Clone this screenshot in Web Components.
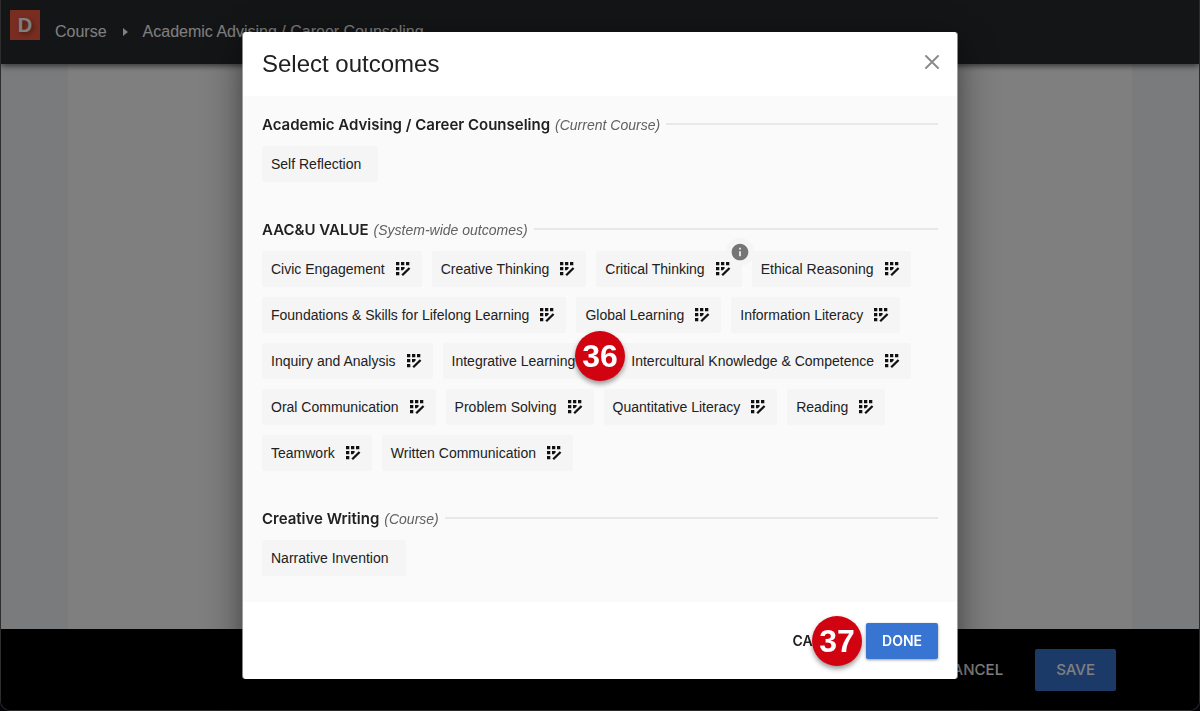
<!DOCTYPE html>
<html lang="en">
<head>
<meta charset="utf-8">
<meta name="viewport" content="width=device-width, initial-scale=1">
<title>Select outcomes</title>
<style>
  body { margin: 0; background: #05070c; font-family: "Liberation Sans", Arial, Helvetica, sans-serif; color: #212121; }
</style>
</head>
<body>
<course-page>
  <course-crumbs slot="header"></course-crumbs>
  <action-button slot="footer" size="large" tone="light">CANCEL</action-button>
  <action-button slot="footer" size="large" primary>SAVE</action-button>
</course-page>

<modal-dialog heading="Select outcomes">
  <outcome-group heading="Academic Advising / Career Counseling" note="(Current Course)">
    <outcome-chip>Self Reflection</outcome-chip>
  </outcome-group>
  <outcome-group heading="AAC&amp;U VALUE" note="(System-wide outcomes)">
    <outcome-chip rubric>Civic Engagement</outcome-chip>
    <outcome-chip rubric>Creative Thinking</outcome-chip>
    <outcome-chip rubric info>Critical Thinking</outcome-chip>
    <outcome-chip rubric>Ethical Reasoning</outcome-chip>
    <outcome-chip rubric>Foundations &amp; Skills for Lifelong Learning</outcome-chip>
    <outcome-chip rubric>Global Learning</outcome-chip>
    <outcome-chip rubric>Information Literacy</outcome-chip>
    <outcome-chip rubric>Inquiry and Analysis</outcome-chip>
    <outcome-chip rubric>Integrative Learning</outcome-chip>
    <outcome-chip rubric>Intercultural Knowledge &amp; Competence</outcome-chip>
    <outcome-chip rubric>Oral Communication</outcome-chip>
    <outcome-chip rubric>Problem Solving</outcome-chip>
    <outcome-chip rubric>Quantitative Literacy</outcome-chip>
    <outcome-chip rubric>Reading</outcome-chip>
    <outcome-chip rubric>Teamwork</outcome-chip>
    <outcome-chip rubric>Written Communication</outcome-chip>
  </outcome-group>
  <outcome-group heading="Creative Writing" note="(Course)">
    <outcome-chip>Narrative Invention</outcome-chip>
  </outcome-group>
  <step-badge slot="body-step">36</step-badge>
  <action-button slot="actions">CANCEL</action-button>
  <action-button slot="actions" primary raised>DONE</action-button>
  <step-badge slot="action-step">37</step-badge>
</modal-dialog>

<script>
const define = (name, render) => customElements.define(name, class extends HTMLElement {
  constructor() { super(); this.attachShadow({ mode: "open" }); }
  connectedCallback() { this.shadowRoot.innerHTML = render(this); }
});
const escapeText = s => (s || "").replace(/&/g, "&amp;").replace(/</g, "&lt;");

define("course-page", () => `
  <style>
    :host { display: flex; flex-direction: column; min-height: 100vh; box-sizing: border-box; overflow: hidden;
            border: 1px solid #5a5a5a; border-top: 0; border-radius: 0 0 10px 10px; background: #000; }
    header { height: 64px; background: #282a2c; box-shadow: 0 2px 6px rgba(0,0,0,.6); position: relative; }
    main { flex: 1; display: flex; background: #f4f6fa; }
    .sheet { flex: 1; margin: 0 67px; background: #fff; }
    footer { display: flex; align-items: center; justify-content: flex-end; height: 81px; padding-right: 83px; background: #000; }
  </style>
  <header><slot name="header"></slot></header>
  <main><div class="sheet"></div></main>
  <footer><slot name="footer"></slot></footer>`);

define("course-crumbs", () => `
  <style>
    :host { display: flex; align-items: flex-start; padding: 10px 0 0 9px; font-size: 16px; line-height: 30px; color: #fff; }
    .logo { width: 30px; height: 30px; background: #f05a40; margin-right: 15px; flex: none; color: #fff;
            font-size: 20px; font-weight: bold; text-align: center; text-decoration: none; text-shadow: 2px 2px 4px rgba(0,0,0,.4); }
    nav { display: flex; align-items: center; padding-top: 7px; }
    nav a { color: inherit; text-decoration: none; white-space: nowrap; }
    svg { width: 5px; height: 8px; margin: 0 15px 0 16px; }
  </style>
  <a class="logo" href="#">D</a>
  <nav aria-label="Breadcrumb">
    <a href="#">Course</a>
    <svg viewBox="0 0 5 8" aria-hidden="true"><path d="M0 0l5 4-5 4z" fill="#fff"/></svg>
    <a href="#">Academic Advising / Career Counseling</a>
  </nav>`);

define("action-button", () => `
  <style>
    :host { display: block; }
    button { font: 600 14px/20px Inter, "Liberation Sans", sans-serif; color: #212121; height: 36px; padding: 0 16px;
             border: 0; border-radius: 2px; background: none; }
    :host([size=large]) button { font-size: 15px; font-weight: 500; height: 42px; padding: 0 21px; }
    :host([tone=light]) button { color: #fff; padding: 0 32px; }
    :host([primary]) button { color: #fff; background: #3874d1; }
    :host([raised]) button { box-shadow: 0 1px 3px rgba(0,0,0,.4); }
  </style>
  <button type="button"><slot></slot></button>`);

define("modal-dialog", el => `
  <style>
    :host { position: fixed; inset: 0; display: flex; align-items: flex-start; justify-content: center;
            padding: 32px 16px; box-sizing: border-box; overflow: auto; background: rgba(0,0,0,.5); }
    .dialog { position: relative; width: 100%; max-width: 714px; background: #fff; border: solid rgba(190,190,190,.7); border-width: 0 1px; background-clip: padding-box;
              border-radius: 3px; box-shadow: 0 10px 46px rgba(0,0,0,.4), 0 8px 20px rgba(0,0,0,.2); }
    header { display: flex; align-items: center; justify-content: space-between; height: 64px; padding: 0 16px 0 19px; }
    h1 { margin: 0; font-size: 24px; line-height: 32px; font-weight: 400; }
    .close { display: block; border: 0; background: none; padding: 0; width: 18px; height: 18px; margin-bottom: 4px; }
    .close svg { display: block; }
    .body { display: flex; flex-direction: column; gap: 35px; padding: 16px 19px 26px; background: #fafafa; }
    footer { display: flex; justify-content: flex-end; padding: 21px 19px 20px; }
    .step { position: absolute; }
    .step.middle { left: calc(50% - 25px); top: 299px; }
    .step.low { right: 95px; bottom: 13px; }
  </style>
  <section class="dialog" role="dialog" aria-modal="true" aria-labelledby="title">
    <header>
      <h1 id="title">${escapeText(el.getAttribute("heading"))}</h1>
      <button class="close" type="button" aria-label="Close">
        <svg width="18" height="18" viewBox="0 0 18 18"><path d="M3 3l12 12M15 3L3 15" stroke="#8c8c8c" stroke-width="2" stroke-linecap="round"/></svg>
      </button>
    </header>
    <div class="body"><slot></slot></div>
    <footer><slot name="actions"></slot></footer>
    <div class="step middle"><slot name="body-step"></slot></div>
    <div class="step low"><slot name="action-step"></slot></div>
  </section>`);

define("outcome-group", el => `
  <style>
    :host { display: block; }
    .title { display: flex; align-items: center; gap: 5px; margin-bottom: 10px; line-height: 22px; }
    h2 { margin: 0; padding-top: 2px; font: 600 15px/22px Inter, "Liberation Sans", sans-serif; }
    em { padding-top: 2px; font-size: 14px; color: #616161; }
    .rule { flex: 1; height: 2px; background: #e8e8e8; margin-left: 1px; }
    .chips { display: flex; flex-wrap: wrap; gap: 10px; }
  </style>
  <div class="title">
    <h2>${escapeText(el.getAttribute("heading"))}</h2>
    <em>${escapeText(el.getAttribute("note"))}</em>
    <span class="rule"></span>
  </div>
  <div class="chips"><slot></slot></div>`);

define("outcome-chip", el => `
  <style>
    :host { display: block; position: relative; }
    button { display: flex; align-items: center; gap: 10px; height: 36px; padding: 0 17px 0 9px; border: 0; border-radius: 2px;
             background: #f5f5f5; color: #212121; font: 14px/20px "Liberation Sans", Arial, sans-serif; white-space: nowrap; }
    :host([rubric]) button { padding-right: 11px; }
    .rubric { width: 16px; height: 16px; }
    .info { position: absolute; top: -13px; right: -12px; width: 28px; height: 28px; border-radius: 50%; background: #f5f5f5;
            display: flex; align-items: center; justify-content: center; }
  </style>
  <button type="button"><slot></slot>${el.hasAttribute("rubric") ? `
    <svg class="rubric" viewBox="0 0 16 16" aria-hidden="true">
      <path fill="#111" d="M1 1h3.3v3.3H1zM6 1h3.3v3.3H6zM11 1h3.3v3.3H11zM1 6h3.3v3.3H1zM6 6h3.6v1.6L7.9 9.3H6zM1 11h3.3v3.3H1z"/>
      <path d="M7.2 14.2l7.4-7.2" stroke="#111" stroke-width="2.3"/>
    </svg>` : ""}</button>
  ${el.hasAttribute("info") ? `<span class="info"><svg width="20" height="20" viewBox="0 0 24 24" fill="#757575" aria-hidden="true">
    <path d="M12 2C6.48 2 2 6.48 2 12s4.48 10 10 10 10-4.48 10-10S17.52 2 12 2zm1 15h-2v-6h2v6zm0-8h-2V7h2v2z"/></svg></span>` : ""}`);

define("step-badge", () => `
  <style>
    :host { display: block; width: 50px; height: 50px; border-radius: 50%; background: #d10311; color: #fff;
            font-size: 32px; font-weight: bold; line-height: 50px; text-align: center; box-shadow: 0 3px 5px rgba(0,0,0,.4); }
  </style>
  <slot></slot>`);
</script>
</body>
</html>
